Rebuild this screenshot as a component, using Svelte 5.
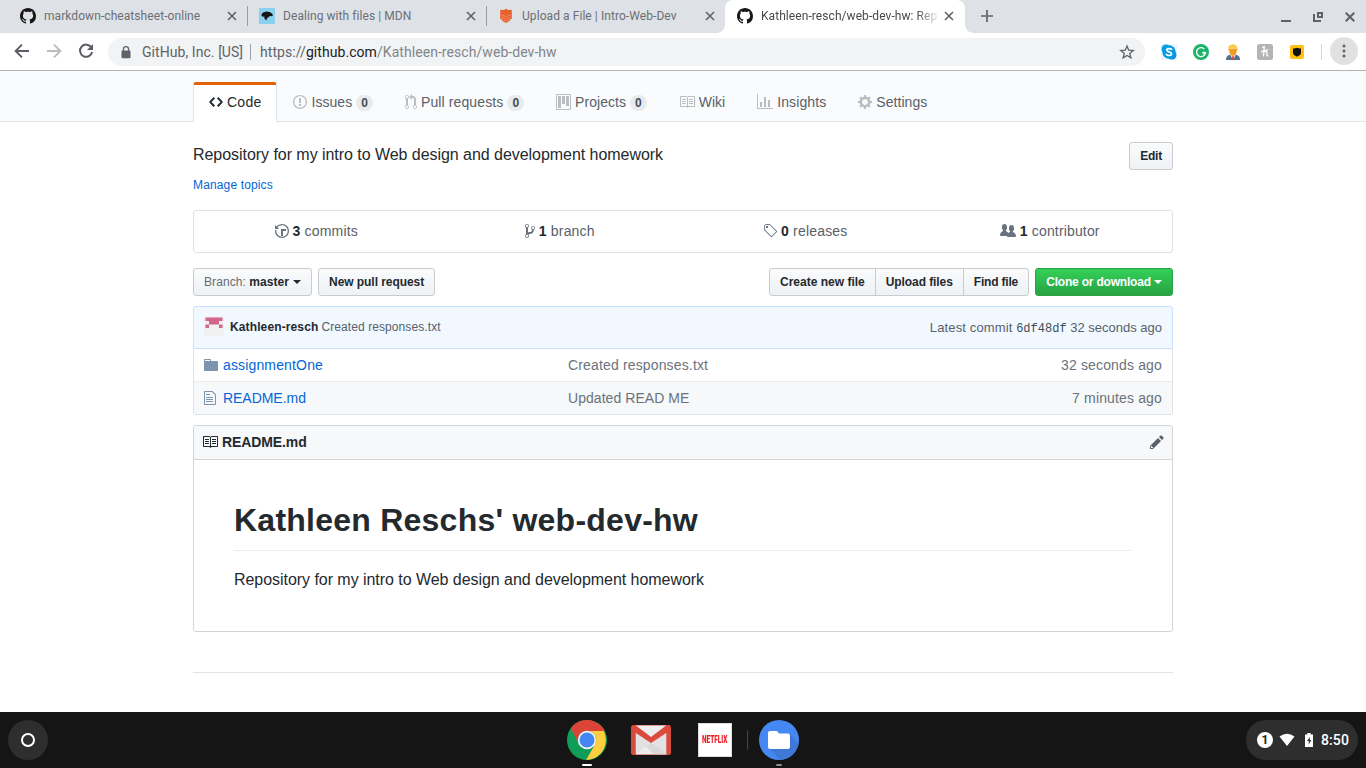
<script>
  const icons = {
    github: [16, 'M8 0C3.58 0 0 3.58 0 8c0 3.54 2.29 6.53 5.47 7.59.4.07.55-.17.55-.38 0-.19-.01-.82-.01-1.49-2.01.37-2.53-.49-2.69-.94-.09-.23-.48-.94-.82-1.13-.28-.15-.68-.52-.01-.53.63-.01 1.08.58 1.23.82.72 1.21 1.87.87 2.33.66.07-.52.28-.87.51-1.07-1.78-.2-3.64-.89-3.64-3.95 0-.87.31-1.59.82-2.15-.08-.2-.36-1.02.08-2.12 0 0 .67-.21 2.2.82.64-.18 1.32-.27 2-.27.68 0 1.36.09 2 .27 1.53-1.04 2.2-.82 2.2-.82.44 1.1.16 1.92.08 2.12.51.56.82 1.27.82 2.15 0 3.07-1.87 3.75-3.65 3.95.29.25.54.73.54 1.48 0 1.07-.01 1.93-.01 2.2 0 .21.15.46.55.38A8.013 8.013 0 0 0 16 8c0-4.42-3.58-8-8-8z'],
    code: [14, 'M9.5 3L8 4.5 11.5 8 8 11.5 9.5 13 14 8 9.5 3zm-5 0L0 8l4.5 5L6 11.5 2.5 8 6 4.5 4.5 3z'],
    issue: [14, 'M7 2.3c3.14 0 5.7 2.56 5.7 5.7s-2.56 5.7-5.7 5.7A5.71 5.71 0 0 1 1.3 8c0-3.14 2.56-5.7 5.7-5.7zM7 1C3.14 1 0 4.14 0 8s3.14 7 7 7 7-3.14 7-7-3.14-7-7-7zm1 3H6v5h2V4zm0 6H6v2h2v-2z'],
    pull: [12, 'M11 11.28V5c-.03-.78-.34-1.47-.94-2.06C9.46 2.35 8.78 2.03 8 2H7V0L4 3l3 3V4h1c.27.02.48.11.69.31.21.2.3.42.31.69v6.28A1.993 1.993 0 0 0 10 15a1.993 1.993 0 0 0 1-3.72zm-1 2.92c-.66 0-1.2-.55-1.2-1.2 0-.65.55-1.2 1.2-1.2.65 0 1.2.55 1.2 1.2 0 .65-.55 1.2-1.2 1.2zM4 3c0-1.11-.89-2-2-2a1.993 1.993 0 0 0-1 3.72v6.56A1.993 1.993 0 0 0 2 15a1.993 1.993 0 0 0 1-3.72V4.72c.59-.34 1-.98 1-1.72zm-.8 10c0 .66-.55 1.2-1.2 1.2-.65 0-1.2-.55-1.2-1.2 0-.65.55-1.2 1.2-1.2.65 0 1.2.55 1.2 1.2zM2 4.2C1.34 4.2.8 3.65.8 3c0-.65.55-1.2 1.2-1.2.65 0 1.2.55 1.2 1.2 0 .65-.55 1.2-1.2 1.2z'],
    project: [15, 'M10 12h3V2h-3v10zm-4-2h3V2H6v8zm-4 4h3V2H2v12zm-1 1h13V1H1v14zM14 0H1a1 1 0 0 0-1 1v14a1 1 0 0 0 1 1h13a1 1 0 0 0 1-1V1a1 1 0 0 0-1-1z'],
    book: [16, 'M3 5h4v1H3V5zm0 3h4V7H3v1zm0 2h4V9H3v1zm11-5h-4v1h4V5zm0 2h-4v1h4V7zm0 2h-4v1h4V9zm2-6v9c0 .55-.45 1-1 1H9.5l-1 1-1-1H2c-.55 0-1-.45-1-1V3c0-.55.45-1 1-1h5.5l1 1 1-1H15c.55 0 1 .45 1 1zm-8 .5L7.5 3H2v9h6V3.5zm7-.5H9.5l-.5.5V12h6V3z'],
    graph: [16, 'M16 14v1H0V0h1v14h15zM5 13H3V8h2v5zm4 0H7V3h2v10zm4 0h-2V6h2v7z'],
    gear: [14, 'M14 8.77v-1.6l-1.94-.64-.45-1.09.88-1.84-1.13-1.13-1.81.91-1.09-.45-.69-1.92h-1.6l-.63 1.94-1.11.45-1.84-.88-1.13 1.13.91 1.81-.45 1.09L0 7.23v1.59l1.94.64.45 1.09-.88 1.84 1.13 1.13 1.81-.91 1.09.45.69 1.92h1.59l.63-1.94 1.11-.45 1.84.88 1.13-1.13-.92-1.81.47-1.09L14 8.75v.02zM7 11c-1.66 0-3-1.34-3-3s1.34-3 3-3 3 1.34 3 3-1.34 3-3 3z'],
    history: [14, 'M8 13H6V6h5v2H8v5zM7 1C4.81 1 2.87 2.02 1.59 3.59L0 2v4h4L2.5 4.5C3.55 3.17 5.17 2.3 7 2.3c3.14 0 5.7 2.56 5.7 5.7s-2.56 5.7-5.7 5.7A5.71 5.71 0 0 1 1.3 8c0-.34.03-.67.09-1H.08C.03 7.33 0 7.66 0 8c0 3.86 3.14 7 7 7s7-3.14 7-7-3.14-7-7-7z'],
    branch: [10, 'M10 5c0-1.11-.89-2-2-2a1.993 1.993 0 0 0-1 3.72v.3c-.02.52-.23.98-.63 1.38-.4.4-.86.61-1.38.63-.83.02-1.48.16-2 .45V4.72a1.993 1.993 0 0 0-1-3.72C.88 1 0 1.89 0 3a2 2 0 0 0 1 1.72v6.56c-.59.35-1 .99-1 1.72 0 1.11.89 2 2 2 1.11 0 2-.89 2-2 0-.53-.2-1-.53-1.36.09-.06.48-.41.59-.47.25-.11.56-.17.94-.17 1.05-.05 1.95-.45 2.75-1.25S8.95 7.77 9 6.73h-.02C9.59 6.37 10 5.73 10 5zM2 1.8c.66 0 1.2.55 1.2 1.2 0 .65-.55 1.2-1.2 1.2C1.35 4.2.8 3.65.8 3c0-.65.55-1.2 1.2-1.2zm0 12.41c-.66 0-1.2-.55-1.2-1.2 0-.65.55-1.2 1.2-1.2.65 0 1.2.55 1.2 1.2 0 .65-.55 1.2-1.2 1.2zm6-8c-.66 0-1.2-.55-1.2-1.2 0-.65.55-1.2 1.2-1.2.65 0 1.2.55 1.2 1.2 0 .65-.55 1.2-1.2 1.2z'],
    tag: [14, 'M7.685 1.72a2.49 2.49 0 0 0-1.76-.726H3.48A2.5 2.5 0 0 0 .994 3.48v2.456c0 .656.269 1.292.726 1.76l6.024 6.024a.99.99 0 0 0 1.402 0l4.563-4.563a.99.99 0 0 0 0-1.402L7.685 1.72zM2.366 7.048a1.54 1.54 0 0 1-.467-1.123V3.48c0-.874.716-1.58 1.58-1.58h2.456c.418 0 .825.159 1.123.467l6.104 6.094-4.702 4.702-6.094-6.114zm.626-4.066h1.989v1.989H2.982V2.982h.01z'],
    people: [16, 'M16 12.999c0 .439-.45 1-1 1H7.995c-.539 0-.994-.447-.995-.999H1c-.54 0-1-.561-1-1 0-2.634 3-4 3-4s.229-.409 0-1c-.841-.621-1.058-.59-1-3 .058-2.419 1.367-3 2.5-3s2.442.58 2.5 3c.058 2.41-.159 2.379-1 3-.229.59 0 1 0 1s1.549.711 2.42 2.088C9.196 9.369 10 8.999 10 8.999s.229-.409 0-1c-.841-.62-1.058-.59-1-3 .058-2.419 1.367-3 2.5-3s2.437.581 2.495 3c.059 2.41-.158 2.38-1 3-.229.59 0 1 0 1s3.005 1.366 3.005 4'],
    folder: [14, 'M13 4H7V3c0-.66-.31-1-1-1H1c-.55 0-1 .45-1 1v10c0 .55.45 1 1 1h12c.55 0 1-.45 1-1V5c0-.55-.45-1-1-1zM6 4H1V3h5v1z'],
    file: [12, 'M6 5H2V4h4v1zM2 8h7V7H2v1zm0 2h7V9H2v1zm0 2h7v-1H2v1zm10-7.5V14c0 .55-.45 1-1 1H1c-.55 0-1-.45-1-1V2c0-.55.45-1 1-1h7.5L12 4.5zM11 5L8 2H1v12h10V5z'],
    pencil: [14, 'M0 12v3h3l8-8-3-3-8 8zm3 2H1v-2h1v1h1v1zm10.3-9.3L12 6 9 3l1.3-1.3a.996.996 0 0 1 1.41 0l1.59 1.59c.39.39.39 1.02 0 1.41z']
  };

  const tabs = [
    { title: 'markdown-cheatsheet-online', icon: 'github' },
    { title: 'Dealing with files | MDN', icon: 'mdn' },
    { title: 'Upload a File | Intro-Web-Dev', icon: 'stack' },
    { title: 'Kathleen-resch/web-dev-hw: Rep', icon: 'github', active: true }
  ];

  // "track" is the letter-spacing of a label, in px
  const nav = [
    { label: 'Code', icon: 'code', active: true, track: 0.25 },
    { label: 'Issues', icon: 'issue', count: 0, track: 0.05 },
    { label: 'Pull requests', icon: 'pull', count: 0, track: 0.12 },
    { label: 'Projects', icon: 'project', count: 0, track: 0.05 },
    { label: 'Wiki', icon: 'book', track: 0 },
    { label: 'Insights', icon: 'graph', track: 0.1 },
    { label: 'Settings', icon: 'gear', track: 0.05 }
  ];

  const stats = [
    { icon: 'history', n: 3, label: 'commits', track: 0.18 },
    { icon: 'branch', n: 1, label: 'branch', track: 0.2 },
    { icon: 'tag', n: 0, label: 'releases', track: 0.2 },
    { icon: 'people', n: 1, label: 'contributor', track: 0.16 }
  ];

  const tools = [
    { label: 'Create new file', track: 0 },
    { label: 'Upload files', track: -0.08 },
    { label: 'Find file', track: -0.2 }
  ];

  const files = [
    { icon: 'folder', name: 'assignmentOne', track: 0.15, msg: 'Created responses.txt', mtrack: 0.15, age: '32 seconds ago' },
    { icon: 'file', name: 'README.md', track: -0.04, msg: 'Updated READ ME', mtrack: 0.05, age: '7 minutes ago' }
  ];
</script>

{#snippet oct(name)}
  <svg class="oct" width={icons[name][0]} height="16" viewBox="0 0 {icons[name][0]} 16"><path fill-rule="evenodd" d={icons[name][1]} /></svg>
{/snippet}

{#snippet favicon(name)}
  {#if name === 'github'}
    {@render oct('github')}
  {:else if name === 'mdn'}
    <svg width="16" height="16" viewBox="0 0 16 16">
      <rect width="16" height="16" fill="#8bd0ee" />
      <path d="M2.300 6.800 4 4.500l3.500-1 3 .5 2.500 1.500 1 2-1.500.8-2-.2-1 1.400-1.500.5L7.300 12.500 6 11.300l-.8-1.500.3-1.300-1.700.2-1-.7z" fill="#151515" />
    </svg>
  {:else}
    <svg width="16" height="16" viewBox="0 0 16 16">
      <path d="M8 .8 10 2l3.700-.2.3 8.800-1.500.6-.8 1.800L8 15l-3.700-2-.8-1.800-1.500-.6.300-8.800L6 2z" fill="#e9602f" />
      <path d="m2.300 6.500 5.700 2 5.700-2M2.300 8.800l5.700 2 5.700-2M3 11.200l5 1.700 5-1.700" fill="none" stroke="#f5a283" stroke-width=".6" />
    </svg>
  {/if}
{/snippet}

<div class="screen">
  <header class="tabstrip">
    {#each tabs as t, i}
      <div class="tab" class:active={t.active} class:sep={i < 2}>
        <span class="fav">{@render favicon(t.icon)}</span>
        <span class="title">{t.title}</span>
        <svg class="close" width="10" height="10" viewBox="0 0 10 10"><path d="m1 1 8 8M9 1 1 9" stroke="currentColor" stroke-width="1.6" /></svg>
      </div>
    {/each}
    <svg class="plus" width="12" height="12" viewBox="0 0 12 12"><path d="M6 0v12M0 6h12" stroke="#5f6368" stroke-width="1.7" /></svg>
    <div class="winctl">
      <svg width="10" height="12" viewBox="0 0 10 12"><path d="M0 10h10" stroke="#5f6368" stroke-width="2" /></svg>
      <svg width="10" height="12" viewBox="0 0 10 12"><path d="M5 2h4v4H5zM1 3v7h7" fill="none" stroke="#5f6368" stroke-width="2" /></svg>
      <svg width="10" height="12" viewBox="0 0 10 12"><path d="m.7 1.700 8.600 8.600m0-8.600L.7 10.300" stroke="#5f6368" stroke-width="2" /></svg>
    </div>
  </header>

  <div class="toolbar">
    <svg class="navbtn" width="16" height="16" viewBox="0 0 16 16"><path d="M15 8H2.200M8 1.600 1.600 8 8 14.400" fill="none" stroke="#5a5e63" stroke-width="1.900" /></svg>
    <svg class="navbtn" width="16" height="16" viewBox="0 0 16 16"><path d="M1 8h12.800M8 1.600 14.400 8 8 14.400" fill="none" stroke="#babcbe" stroke-width="1.900" /></svg>
    <svg class="navbtn" width="16" height="16" viewBox="0 0 16 16"><path d="M13.400 4.600A6.100 6.100 0 1 0 14.100 9" fill="none" stroke="#5a5e63" stroke-width="2" /><path d="M15 1v6H9z" fill="#5a5e63" /></svg>
    <div class="omnibox">
      <svg width="10" height="13" viewBox="0 0 10 13"><path d="M2.400 5V3.300a2.600 2.600 0 0 1 5.200 0V5" fill="none" stroke="#5f6368" stroke-width="1.300" /><rect x=".5" y="4.600" width="9" height="7.600" rx="1" fill="#5f6368" /></svg>
      <span class="org">GitHub, Inc. [US]</span>
      <span class="bar"></span>
      <span class="url"><i>https://</i>github.com<b>/Kathleen-resch/web-dev-hw</b></span>
      <svg class="star" width="16" height="16" viewBox="0 0 16 16"><path d="m8 2 1.700 4.200 4.500.3-3.500 2.900 1.200 4.400L8 11.400l-3.900 2.400 1.200-4.400L1.800 6.500l4.500-.3z" fill="none" stroke="#5f6368" stroke-width="1.300" /></svg>
    </div>
    <div class="exts">
      <svg width="16" height="16" viewBox="0 0 16 16"><rect width="16" height="16" fill="#eef5fb" /><circle cx="5" cy="5" r="4.500" fill="#00a2e8" /><circle cx="11" cy="11" r="4.500" fill="#0b8fdc" /><circle cx="8" cy="8" r="6.700" fill="#089be2" /><path d="M10.500 5.400C9.900 4.400 5.700 4 5.700 6.100c0 2.200 4.900 1.300 4.900 3.700 0 2.200-4.400 2.200-5.200.5" fill="none" stroke="#fff" stroke-width="1.700" stroke-linecap="round" /></svg>
      <svg width="16" height="16" viewBox="0 0 16 16"><circle cx="8" cy="8" r="8" fill="#1bb36b" /><path d="M11.300 5A4.500 4.500 0 1 0 12.500 8.700H9.200" fill="none" stroke="#fff" stroke-width="1.400" /><path d="m10.600 7 2.200 1.700-2.200 1.600" fill="#fff" /></svg>
      <svg width="16" height="16" viewBox="0 0 16 16"><path d="M1 16c0-4 2-5 5-5.500h4c3 .5 5 1.500 5 5.500z" fill="#53728a" /><path d="m5 10.500 3 5.500 3-5.500z" fill="#e8eef2" /><path d="m7.400 12 .6-.8.7.8.4 4H6.900z" fill="#e33b3b" /><path d="M4 4.500h8c0 4.500-1.500 7.300-4 7.300S4 9 4 4.500" fill="#f59b23" /><path d="M3.600 7C2.700 2.500 4 .8 6 .9c1.500-1.300 7.500-.6 6.400 6.100l-1-2.700c-1.700.4-3.500-.6-4.600-.4L4.800 5z" fill="#ffca45" /></svg>
      <svg width="16" height="16" viewBox="0 0 16 16"><rect width="16" height="16" rx="2.500" fill="#b3b4b5" /><path d="M5 3.500 7.300 2.700 6.400 12.500M4 7.800l7.200-2.300M7 8.300c2-2 3.500-1 3 1-.4 1.800-.3 3 1.200 2.400" fill="none" stroke="#fff" stroke-width="1.300" /></svg>
      <svg width="16" height="16" viewBox="0 0 16 16"><rect x="1" y="1" width="14" height="14" rx="2" fill="#fec20e" /><path d="M4 4.500c1.500.2 2.500-.2 4-.8 1.500.6 2.500 1 4 .8v4.300c0 1.700-1.500 2.700-4 4-2.500-1.300-4-2.300-4-4z" fill="#111" /></svg>
    </div>
    <span class="tsep"></span>
    <span class="menu"><svg width="4" height="14" viewBox="0 0 4 14"><circle cx="2" cy="2" r="1.500" /><circle cx="2" cy="7" r="1.500" /><circle cx="2" cy="12" r="1.500" /></svg></span>
  </div>

  <main class="page">
    <div class="repohead">
      <nav class="wrap">
        {#each nav as n}
          <a class="navitem" class:active={n.active}>{@render oct(n.icon)}<span style:letter-spacing="{n.track}px">{n.label}</span>{#if n.count !== undefined}<span class="counter">{n.count}</span>{/if}</a>
        {/each}
      </nav>
    </div>

    <div class="wrap">
      <div class="about">
        <span class="desc">Repository for my intro to Web design and development homework</span>
        <button class="btn tight">Edit</button>
      </div>
      <a class="topics">Manage topics</a>

      <div class="stats">
        {#each stats as s}
          <div class="stat {s.icon}">{@render oct(s.icon)}<span style:letter-spacing="{s.track}px"><strong>{s.n}</strong> {s.label}</span></div>
        {/each}
      </div>

      <div class="filenav">
        <button class="btn select"><span class="light">Branch:</span> master<span class="caret"></span></button>
        <button class="btn pullreq">New pull request</button>
        <div class="group">
          {#each tools as t}
            <button class="btn" style:letter-spacing="{t.track}px">{t.label}</button>
          {/each}
        </div>
        <button class="btn green">Clone or download<span class="caret"></span></button>
      </div>

      <div class="commit">
        <svg width="20" height="20" viewBox="0 0 20 20"><rect width="20" height="20" rx="2" fill="#f0f0f0" /><path d="M1.500 1.500h17V5h-3.500v3.500H5V5H1.500zM1.500 8.500H5V12H1.500zM15 8.500h3.500V12H15z" fill="#d3648a" /></svg>
        <strong>Kathleen-resch</strong>
        <span class="cmsg">Created responses.txt</span>
        <span class="latest"><span class="lead">Latest commit</span> <code>6df48df</code> 32 seconds ago</span>
      </div>
      <div class="files">
        {#each files as f}
          <div class="row">
            <span class="ficon">{@render oct(f.icon)}</span>
            <a class="fname" style:letter-spacing="{f.track}px">{f.name}</a>
            <span style:letter-spacing="{f.mtrack}px">{f.msg}</span>
            <span class="age">{f.age}</span>
          </div>
        {/each}
      </div>

      <section class="readme">
        <h3>{@render oct('book')}<span class="rname">README.md</span><span class="edit">{@render oct('pencil')}</span></h3>
        <article>
          <h1>Kathleen Reschs' web-dev-hw</h1>
          <p class="desc">Repository for my intro to Web design and development homework</p>
        </article>
      </section>
      <div class="footline"></div>
    </div>
  </main>

  <footer class="shelf">
    <span class="launcher"><svg width="16" height="16" viewBox="0 0 16 16"><circle cx="8" cy="8" r="6" fill="none" stroke="#fff" stroke-width="2" /></svg></span>
    <div class="apps">
      <span class="app running">
        <svg width="40" height="40" viewBox="0 0 40 40">
          <circle cx="20" cy="20" r="20" fill="#109d58" />
          <path d="M36.700 11A20 20 0 0 1 19 40l9-15.500A9 9 0 0 0 20 11z" fill="#ffcd40" />
          <path d="M3.800 8.200A20 20 0 0 1 37.800 11H20a9 9 0 0 0-8.300 12.600z" fill="#dc4437" />
          <circle cx="20" cy="20" r="9.200" fill="#f4f4f4" /><circle cx="20" cy="20" r="7.500" fill="#4486f4" />
        </svg>
      </span>
      <span class="app">
        <svg width="40" height="40" viewBox="0 0 40 40">
          <rect y="5" width="40" height="30" rx="2.500" fill="#d54b3e" /><path d="M4.700 6h30.600v28.300H4.700z" fill="#e2e2e2" /><path d="m5 34.300 15-13 15 13z" fill="#ececec" /><path d="M5 5.500h30V9L20 21 5 9z" fill="#eee" />
          <path d="m14.500 26 5.500-3.500L35.300 33v1.300H23z" fill="#d9d9d9" /><path d="M1 6q2-1.800 4.500 0L20 17 34.500 6q2.500-1.800 4.500 0v4.500L20 23 1 10.500z" fill="#dc4a3d" />
        </svg>
      </span>
      <span class="app"><span class="netflix"><span>NETFLIX</span></span></span>
      <span class="asep"></span>
      <span class="app idle">
        <svg width="40" height="40" viewBox="0 0 40 40"><circle cx="20" cy="20" r="20" fill="#4688f1" /><path d="m10 28 11 11.900A20 20 0 0 0 39.500 24L31 14z" fill="#3e79d8" /><path d="M11 11h7l2 2.500h9q2 0 2 2V27q0 2-2 2H11q-2 0-2-2V13q0-2 2-2z" fill="#fff" /></svg>
      </span>
    </div>
    <div class="tray">
      <span class="note">1</span>
      <svg width="16" height="14" viewBox="0 0 16 14"><path d="M.5 3.500q7.500-5.500 15 0L8 13z" fill="#fff" /></svg>
      <svg class="bat" width="8" height="14" viewBox="0 0 8 14"><path d="M2.300 0h3.400v1.500H8V14H0V1.500h2.300z" fill="#fff" /><path d="M4.800 4 2 8h1.700v3.500L6.400 7H4.800z" fill="#333" /></svg>
      <span class="time">8:50</span>
    </div>
  </footer>
</div>

<style>
  :global(body) { margin: 0; overflow: hidden; }
  .screen { width: 1366px; height: 768px; display: flex; flex-direction: column; background: #fff; overflow: hidden; font-family: "Liberation Sans", Arial, sans-serif; color: #24292e; }
  .screen * { box-sizing: border-box; }
  svg { display: block; flex: none; }
  .oct { fill: currentColor; }

  .tabstrip { height: 33px; flex: none; display: flex; align-items: center; background: #dee1e6; padding-left: 8px; font: 12px/16px Roboto, sans-serif; letter-spacing: .07px; color: #6b6f74; }
  .tab { position: relative; width: 239px; height: 33px; display: flex; align-items: center; padding: 0 10px 1px 12px; }
  .tab .close { color: #5f6368; }
  .tab .fav { width: 16px; margin-right: 8px; color: #1b1718; }
  .tab .title { flex: 1; white-space: nowrap; }
  .tab.sep::after { content: ""; position: absolute; right: -1px; top: 6px; width: 1px; height: 20px; background: #9b9ea3; }
  .tab.active { width: 240px; padding-right: 11px; background: #fff; color: #45494d; border-radius: 8px 8px 0 0; }
  .tab.active .title { -webkit-mask-image: linear-gradient(90deg, #000 85%, transparent 98%); mask-image: linear-gradient(90deg, #000 85%, transparent 98%); }
  .tab.active::before, .tab.active::after { content: ""; position: absolute; bottom: 0; width: 8px; height: 8px; }
  .tab.active::before { left: -8px; background: radial-gradient(circle at 0 0, transparent 7.5px, #fff 8px); }
  .tab.active::after { right: -8px; background: radial-gradient(circle at 100% 0, transparent 7.5px, #fff 8px); }
  .plus { margin-left: 16px; margin-top: -1px; }
  .winctl { margin: 1px 0 0 auto; display: flex; gap: 22px; padding-right: 11px; }

  .toolbar { height: 38px; flex: none; display: flex; align-items: center; background: #fff; border-bottom: 1px solid #b6b0b6; padding-left: 14px; }
  .navbtn { margin: 0 16px 1px 0; }
  .omnibox { width: 1037px; height: 28px; margin: 1px 0 0 -2px; border-radius: 14px; background: #f1f3f4; display: flex; align-items: center; padding: 0 10px 0 13px; font: 14px/20px Roboto, sans-serif; letter-spacing: .06px; color: #5f6368; }
  .org { margin-left: 11px; }
  .bar { width: 1px; height: 16px; background: #9aa0a6; margin: 0 9px 0 7px; }
  .url { color: #202124; }
  .url i { font-style: normal; color: #5f6368; }
  .url b { font-weight: 400; color: #80868b; }
  .star { margin-left: auto; }
  .exts { display: flex; gap: 16px; margin: 1px 0 0 16px; }
  .tsep { width: 1px; height: 16px; background: #d3d4d6; margin: 1px 8px 0 16px; }
  .menu { width: 28px; height: 28px; margin-bottom: 1px; border-radius: 50%; background: #e1e1e1; display: grid; place-items: center; fill: #5f6368; }

  .page { flex: 1; min-height: 0; overflow: hidden; font-size: 14px; line-height: 21px; }
  .wrap { width: 980px; margin: 0 auto; }
  .repohead { height: 51px; background: #fafbfc; border-bottom: 1px solid #e1e4e8; padding-top: 11px; }
  .repohead .wrap { display: flex; }
  .navitem { height: 40px; display: flex; align-items: center; padding: 0 16px; color: #586069; white-space: nowrap; }
  .navitem .oct { color: #babdc1; margin-right: 4px; }
  .navitem.active { background: #fff; border: 1px solid #e1e4e8; border-top: 3px solid #e36209; border-bottom: 0; border-radius: 3px 3px 0 0; color: #24292e; padding: 0 15px 3px; }
  .navitem.active .oct { color: #24292e; }
  .counter { margin: 1px 0 0 4px; padding: 2px 5px; font: bold 12px/12px "Liberation Sans", sans-serif; color: #444d56; background: #e8eaec; border-radius: 20px; }

  .about { display: flex; justify-content: space-between; align-items: flex-start; padding-top: 20px; height: 48px; font-size: 16px; line-height: 26px; }
  .desc { letter-spacing: -.045px; }
  .btn { height: 28px; padding: 0 10px; font: bold 12px/20px "Liberation Sans", sans-serif; color: #24292e; border: 1px solid #c8cbcf; border-radius: 3px; background: linear-gradient(#fafbfc, #eff3f6 90%); white-space: nowrap; }
  .tight { letter-spacing: -.2px; }
  .topics { display: block; font-size: 12px; line-height: 18px; letter-spacing: .14px; color: #0366d6; margin-top: 6px; }
  .stats { margin-top: 16px; height: 43px; display: grid; grid-template-columns: repeat(4, 1fr); border: 1px solid #dfe2e5; border-radius: 3px; color: #586069; }
  .stat { display: flex; justify-content: center; align-items: center; gap: 4px; }
  .stat.branch { padding-right: 2px; }
  .stat .oct { margin-bottom: 1px; color: #6a737d; }
  strong { color: #24292e; }
  .filenav { display: flex; gap: 6px; margin-top: 15px; }
  .select { letter-spacing: .07px; }
  .pullreq { letter-spacing: -.06px; }
  .light { font-weight: 400; color: #666c72; }
  .caret { display: inline-block; margin-left: 4px; vertical-align: middle; position: relative; top: -1px; border: 4px solid transparent; border-top-color: currentColor; border-bottom: 0; }
  .group { display: flex; margin-left: auto; }
  .group .btn { border-radius: 0; margin-left: -1px; }
  .group .btn:first-child { border-radius: 3px 0 0 3px; margin: 0; }
  .group .btn:last-child { border-radius: 0 3px 3px 0; }
  .btn.green { width: 138px; letter-spacing: -.2px; color: #fff; background: linear-gradient(#34d058, #28a745 90%); border-color: #28a047; }
  .green .caret { margin-left: 3px; }

  .commit { margin-top: 10px; height: 43px; padding: 0 10px 1px; display: flex; align-items: center; background: #f1f8ff; border: 1px solid #c8e1ff; border-radius: 3px 3px 0 0; font-size: 12px; letter-spacing: .12px; color: #586069; }
  .commit svg { margin: 0 6px 2px 0; }
  .cmsg { margin-left: 3px; letter-spacing: .09px; }
  .latest { margin-left: auto; font-size: 13px; letter-spacing: 0; padding-top: 1px; }
  .lead { letter-spacing: .14px; }
  code { font: 12px "Liberation Mono", monospace; color: #444d56; }
  .files { border: 1px solid #dfe2e5; border-top: 0; border-radius: 0 0 3px 3px; }
  .row { height: 33px; display: flex; align-items: center; padding: 0 10px; color: #6a737d; }
  .row:first-child { height: 32px; }
  .row + .row { background: #f6f8fa; border-top: 1px solid #eaecef; }
  .ficon { width: 19px; color: #7d94ae; }
  .fname { width: 345px; color: #0366d6; }
  .age { margin-left: auto; letter-spacing: .15px; }

  .readme { margin-top: 10px; height: 207px; border: 1px solid #d1d5da; border-radius: 3px; }
  .readme h3 { margin: 0; height: 34px; display: flex; align-items: center; gap: 4px; padding: 0 8px; font-size: 14px; background: #f6f8fa; border-bottom: 1px solid #d1d5da; border-radius: 3px 3px 0 0; }
  .readme h3 .oct { margin-bottom: 1px; }
  .rname { letter-spacing: -.1px; }
  .edit { margin-left: auto; color: #586069; }
  article { padding: 40px; font-size: 16px; line-height: 26px; }
  h1 { margin: 0 0 16px; font-size: 32px; line-height: 40px; height: 51px; letter-spacing: .24px; border-bottom: 1px solid #eaecef; }
  p { margin: 0; }
  .footline { margin-top: 40px; border-top: 1px solid #e1e4e8; }

  .shelf { position: relative; height: 56px; flex: none; display: grid; grid-template-columns: 1fr auto 1fr; align-items: center; background: #151515; padding: 0 8px; }
  .launcher { width: 40px; height: 40px; border-radius: 50%; background: #2e2e2e; display: grid; place-items: center; }
  .apps { display: flex; align-items: center; gap: 24px; }
  .app { position: relative; width: 40px; height: 40px; display: grid; place-items: center; }
  .running::after, .idle::after { content: ""; position: absolute; left: 15px; bottom: -6px; width: 10px; height: 2px; border-radius: 1px; background: #fff; }
  .idle::after { left: 17px; width: 6px; background: #8b8b8b; }
  .netflix { width: 34px; height: 34px; background: #fff; border: 1px solid #ddd; display: flex; align-items: center; justify-content: center; }
  .netflix span { flex: none; font: 900 10px/12px Roboto, sans-serif; color: #ee1c25; transform: scaleX(.65); }
  .asep { width: 1px; height: 20px; margin: 0 -13px 0 -12px; background: #444; }
  .tray { justify-self: end; width: 112px; height: 40px; border-radius: 20px; background: #2e2e2e; display: flex; align-items: center; padding-left: 11px; color: #fff; }
  .note { width: 16px; height: 16px; border-radius: 50%; background: #fff; color: #222; font: bold 12px/16px Roboto, sans-serif; text-align: center; margin-right: 6px; }
  .bat { margin-left: 10px; }
  .time { margin-left: 8px; font: 500 14px/16px Roboto, sans-serif; letter-spacing: .1px; }
</style>
